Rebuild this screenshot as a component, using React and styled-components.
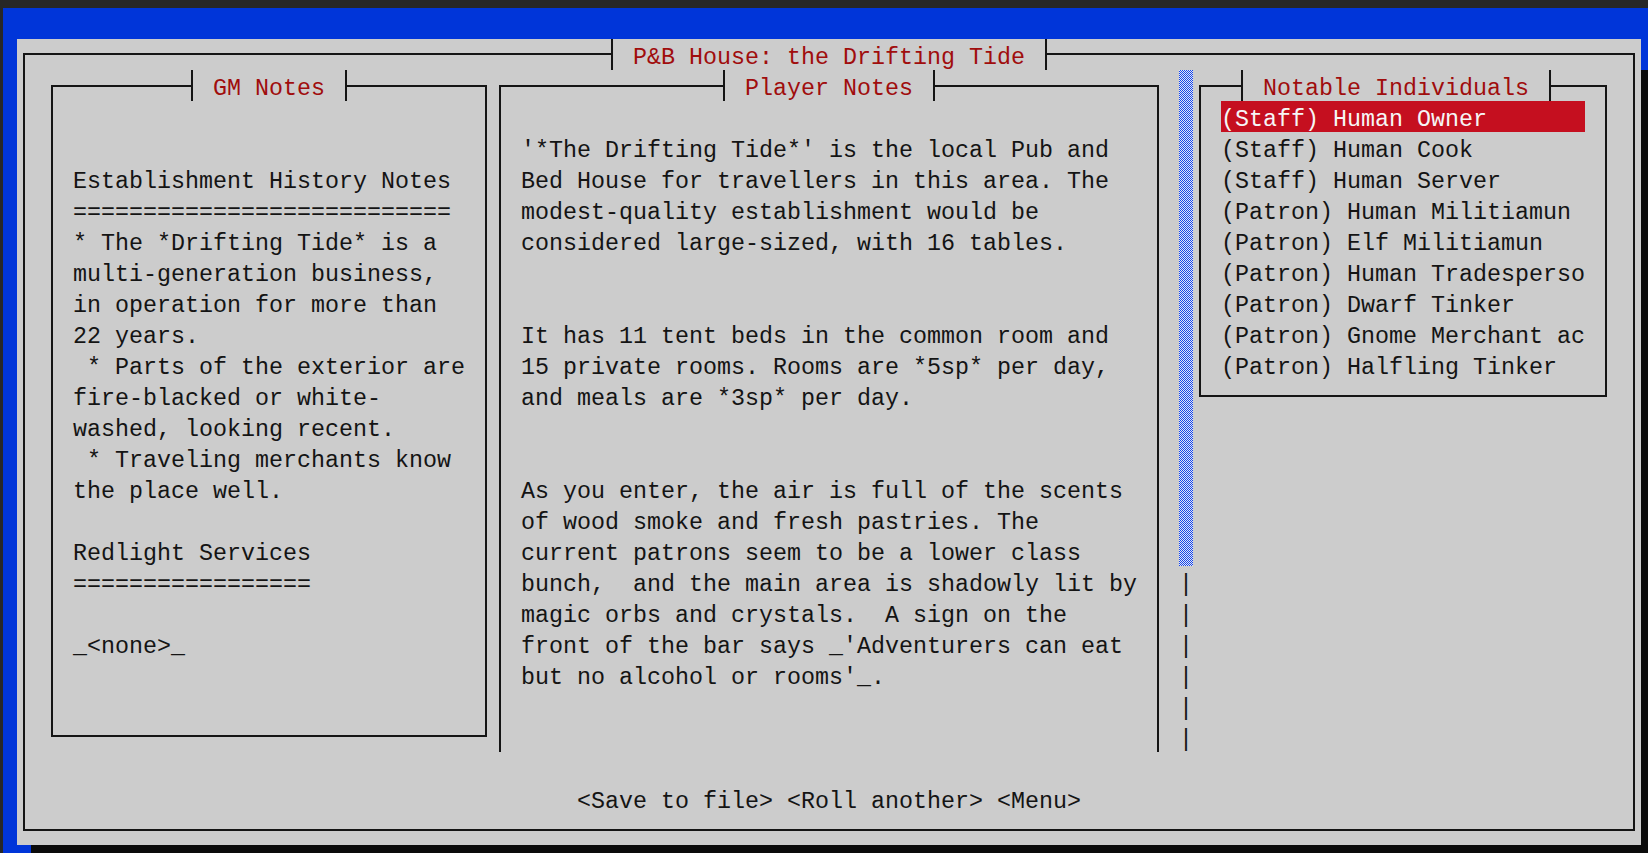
import React from "react";
import styled, { createGlobalStyle } from "styled-components";

// terminal cell: 14px wide, 31px tall
let ink = "#141414";
let paper = "#cccccc";
let screenBlue = "#0035d9";
let titleRed = "#a00d0d";
let pickRed = "#c50f1f";
let shadow = "#0b0b0b";

const gmLines = [
  "",
  "",
  "Establishment History Notes",
  "===========================",
  "* The *Drifting Tide* is a",
  "multi-generation business,",
  "in operation for more than",
  "22 years.",
  " * Parts of the exterior are",
  "fire-blacked or white-",
  "washed, looking recent.",
  " * Traveling merchants know",
  "the place well.",
  "",
  "Redlight Services",
  "=================",
  "",
  "_<none>_"
];

const playerLines = [
  "",
  "'*The Drifting Tide*' is the local Pub and",
  "Bed House for travellers in this area. The",
  "modest-quality establishment would be",
  "considered large-sized, with 16 tables.",
  "",
  "",
  "It has 11 tent beds in the common room and",
  "15 private rooms. Rooms are *5sp* per day,",
  "and meals are *3sp* per day.",
  "",
  "",
  "As you enter, the air is full of the scents",
  "of wood smoke and fresh pastries. The",
  "current patrons seem to be a lower class",
  "bunch,  and the main area is shadowly lit by",
  "magic orbs and crystals.  A sign on the",
  "front of the bar says _'Adventurers can eat",
  "but no alcohol or rooms'_."
];

const people = [
  "(Staff) Human Owner",
  "(Staff) Human Cook",
  "(Staff) Human Server",
  "(Patron) Human Militiamun",
  "(Patron) Elf Militiamun",
  "(Patron) Human Tradesperso",
  "(Patron) Dwarf Tinker",
  "(Patron) Gnome Merchant ac",
  "(Patron) Halfling Tinker"
];

function Caption({ text, top, nudge }) {
  return (
    <TitleBar $top={top} $nudge={nudge}>
      <Tick $side="left" />
      <TitleText>{text}</TitleText>
      <Tick $side="right" />
    </TitleBar>
  );
}

export default function App() {
  return (
    <Window>
      <GlobalStyle />
      <Screen>
        <Dialog>
          <Frame>
            <Caption text="P&B House: the Drifting Tide" top={-16} />
            <Columns>
              <Box $w={436} $h={652}>
                <Caption text="GM Notes" top={-17} />
                {gmLines.map((l, i) => (
                  <Line key={i}>{l}</Line>
                ))}
              </Box>
              <Box $w={660} $h={667} $open $gap={12}>
                <Caption text="Player Notes" top={-17} />
                {playerLines.map((l, i) => (
                  <Line key={i}>{l}</Line>
                ))}
              </Box>
              <Scroll>
                <Thumb />
                {[0, 1, 2, 3, 4, 5].map(i => (
                  <Line key={i} $center>|</Line>
                ))}
              </Scroll>
              <Box $w={408} $h={312} $gap={6}>
                <Caption text="Notable Individuals" top={-17} nudge={-7} />
                {people.map((p, i) => (
                  <Line key={i} $picked={i === 0}>{p}</Line>
                ))}
              </Box>
            </Columns>
            <Buttons>
              <Button>{"<Save to file>"}</Button> <Button>{"<Roll another>"}</Button>{" "}
              <Button>{"<Menu>"}</Button>
            </Buttons>
          </Frame>
        </Dialog>
      </Screen>
    </Window>
  );
}

const GlobalStyle = createGlobalStyle`
  html, body {
    margin: 0;
    padding: 0;
    background: #272727;
  }
  body {
    width: 1648px;
    height: 853px;
    overflow: hidden;
  }
`;

const Window = styled.div`
  height: 853px;
  box-sizing: border-box;
  padding: 8px 0 0 3px;
  background: #272727;
  overflow: hidden;
  display: flex;
`;

const Screen = styled.div`
  flex: 1;
  background: ${screenBlue};
  padding: 31px 0 0 14px;
  font-family: "Liberation Mono", "DejaVu Sans Mono", monospace;
  font-size: 23.33px;
  color: ${ink};
`;

const Dialog = styled.div`
  width: 1624px;
  height: 806px;
  box-sizing: border-box;
  padding: 14px 6px;
  background: ${paper};
  box-shadow: 14px 31px 0 ${shadow};
  display: flex;
`;

const Frame = styled.div`
  position: relative;
  flex: 1;
  border: 2px solid ${ink};
  display: flex;
  flex-direction: column;
`;

const TitleBar = styled.div`
  position: absolute;
  top: ${p => p.$top}px;
  left: 50%;
  transform: translateX(calc(-50% + ${p => p.$nudge || 0}px));
  display: flex;
  height: 31px;
  color: ${titleRed};
`;

const Tick = styled.span`
  position: relative;
  width: 14px;
  height: 31px;
  background: linear-gradient(
    to ${p => (p.$side === "left" ? "right" : "left")},
    transparent 50%,
    ${paper} 50%
  );
  &::before {
    content: "";
    position: absolute;
    left: 6px;
    top: 0;
    bottom: 0;
    width: 2px;
    background: ${ink};
  }
`;

const TitleText = styled.span`
  box-sizing: border-box;
  height: 31px;
  padding: 7px 14px 0;
  line-height: 24px;
  white-space: pre;
  background: ${paper};
`;

const Columns = styled.div`
  display: flex;
  align-items: flex-start;
  padding: 15px 26px 0;
`;

const Box = styled.section`
  position: relative;
  box-sizing: border-box;
  flex: none;
  width: ${p => p.$w}px;
  height: ${p => p.$h}px;
  margin: 15px 0 0 ${p => p.$gap || 0}px;
  padding: 14px 20px 0;
  border: 2px solid ${ink};
  border-bottom: ${p => (p.$open ? "none" : `2px solid ${ink}`)};
`;

const Line = styled.div`
  box-sizing: border-box;
  height: 31px;
  padding-top: 7px;
  line-height: 24px;
  white-space: pre;
  text-align: ${p => (p.$center ? "center" : "left")};
  background: ${p => (p.$picked ? pickRed : "transparent")};
  color: ${p => (p.$picked ? "#f6f6f6" : ink)};
`;

const Scroll = styled.div`
  flex: none;
  width: 14px;
  margin-left: 20px;
  display: flex;
  flex-direction: column;
`;

const Thumb = styled.div`
  height: 496px;
  background: repeating-conic-gradient(#1746e6 0 25%, #dfe5fb 0 50%) 0 0 / 2px 2px;
`;

const Buttons = styled.div`
  box-sizing: border-box;
  height: 31px;
  margin-top: 31px;
  padding-top: 7px;
  line-height: 24px;
  text-align: center;
  white-space: pre;
`;

const Button = styled.span`
  color: ${ink};
`;
